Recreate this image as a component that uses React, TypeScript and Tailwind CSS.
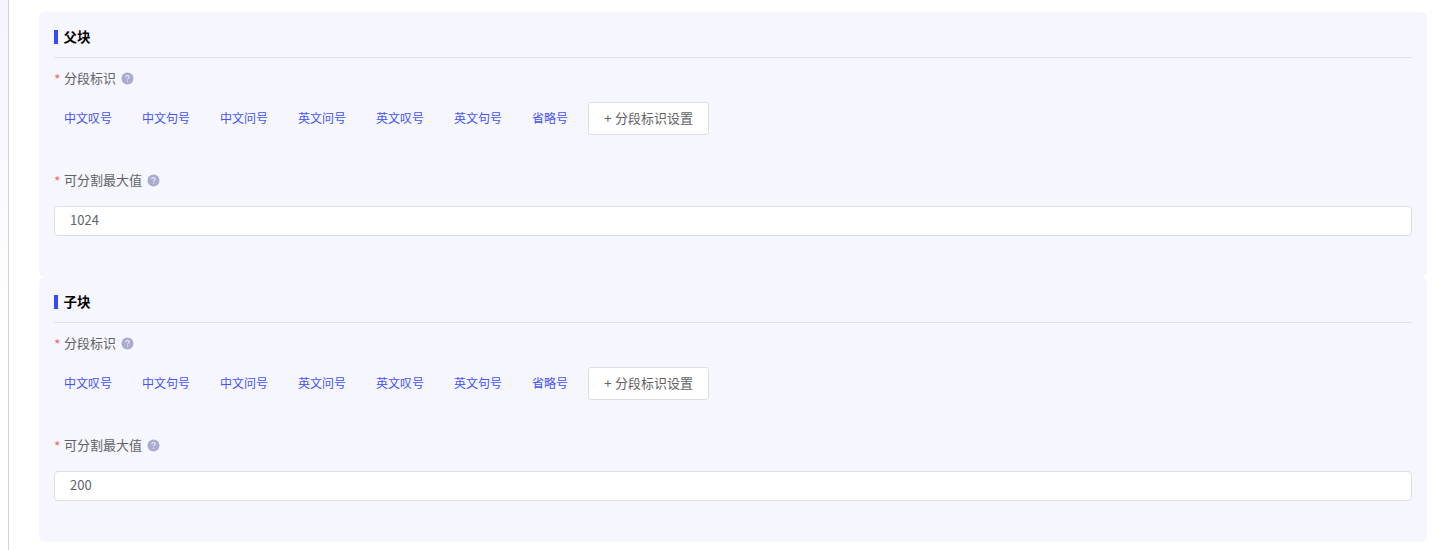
const tags = ['中文叹号', '中文句号', '中文问号', '英文问号', '英文叹号', '英文句号', '省略号'];

function HelpIcon() {
  return (
    <svg className="ml-[5px] size-[13px] shrink-0" viewBox="-0.5 -0.5 13 13" fill="none">
      <circle cx="6" cy="6" r="6" fill="#aaaccf" />
      <path d="M4.300 4.700C4.300 3.600 5 3 6 3s1.700.6 1.700 1.500C7.700 5.600 6 5.700 6 7.100" stroke="#eeeefb" strokeWidth="1.05" />
      <circle cx="6" cy="8.700" r=".65" fill="#eeeefb" />
    </svg>
  );
}

function Label({ text }: { text: string }) {
  return (
    <div className="flex h-5 items-center text-[13px] leading-5 text-[#606266]">
      <span className="mr-1 w-[6px] pt-px text-[14px] text-[#f56c6c]">*</span>
      <span>{text}</span>
      <HelpIcon />
    </div>
  );
}

function Block({ title, value }: { title: string; value: string }) {
  return (
    <section className="h-[265px] rounded-[6px] bg-[#f5f6fe] px-[15px] pt-[15px]">
      <div className="flex h-[31px] items-start border-b border-[#dfe0f5]">
        <span className="mt-[3px] mr-[5.5px] h-[14px] w-1 bg-[#364af5]" />
        <h2 className="text-[13.5px] leading-[18px] font-bold text-black">{title}</h2>
      </div>
      <div className="pt-[10px]">
        <Label text="分段标识" />
      </div>
      <div className="mt-[14px] flex h-[33px] items-center gap-[10px]">
        {tags.map((tag) => (
          <span key={tag} className="flex h-8 items-center rounded-[4px] bg-[#f5f6ff] px-[10px] pb-px text-[12px] leading-none text-[#4353f5]">
            {tag}
          </span>
        ))}
        <button className="flex h-[33px] w-[121px] items-center justify-center rounded-[3px] border border-[#dcdfe6] bg-white pb-[2px] text-[13px] leading-none [word-spacing:0.8px] text-[#606266]">
          + 分段标识设置
        </button>
      </div>
      <div className="mt-[35px]">
        <Label text="可分割最大值" />
      </div>
      <input
        className="mt-4 block h-[30px] w-full rounded-[4px] border border-[#dcdfe6] bg-white px-[15px] pb-[3px] text-[13px] text-[#606266] outline-none"
        defaultValue={value}
      />
    </section>
  );
}

export default function App() {
  return (
    <div className="flex h-[550px] overflow-hidden bg-white font-['Noto_Sans_CJK_SC',sans-serif]">
      <div className="w-[9px] shrink-0 border-r border-[#d0d1d6] bg-linear-to-b from-[#f3f4fe] to-white to-[330px]" />
      <main className="flex-1 pt-3 pr-[17px] pl-[30px]">
        <Block title="父块" value="1024" />
        <Block title="子块" value="200" />
      </main>
    </div>
  );
}
